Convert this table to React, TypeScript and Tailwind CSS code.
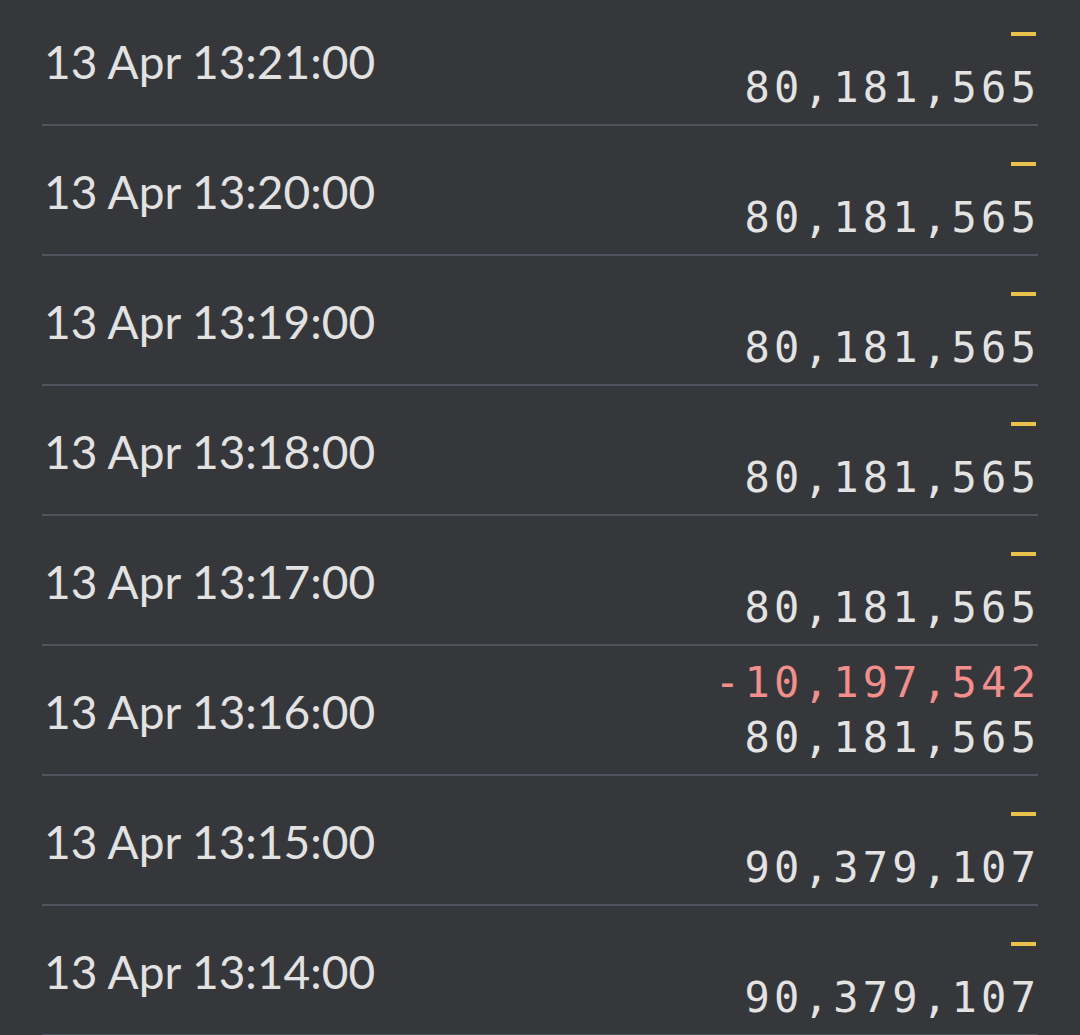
const rows = [
    { time: '13 Apr 13:21:00', change: null, value: '80,181,565' },
    { time: '13 Apr 13:20:00', change: null, value: '80,181,565' },
    { time: '13 Apr 13:19:00', change: null, value: '80,181,565' },
    { time: '13 Apr 13:18:00', change: null, value: '80,181,565' },
    { time: '13 Apr 13:17:00', change: null, value: '80,181,565' },
    { time: '13 Apr 13:16:00', change: '-10,197,542', value: '80,181,565' },
    { time: '13 Apr 13:15:00', change: null, value: '90,379,107' },
    { time: '13 Apr 13:14:00', change: null, value: '90,379,107' },
];

export default function App() {
    return (
        <div className="h-[1035px] w-[1080px] overflow-hidden bg-[#35373b]">
            <div className="-mt-[4px] mx-[42px]">
                {rows.map(row => (
                    <div
                        key={row.time}
                        className="flex h-[130px] items-center justify-between border-b-2 border-[#4f535b]"
                    >
                        <span className="pl-[2px] pt-[2px] text-[46px] text-[#e2e2e2] [font-family:Lato,sans-serif]">
                            {row.time}
                        </span>
                        <div className="flex flex-col items-end pr-[2px] text-[42px] leading-[55px] tracking-[4.3px] [font-family:'DejaVu_Sans_Mono',monospace]">
                            <div className="flex h-[55px] justify-end">
                                {row.change ? (
                                    <span className="mr-[-4.3px] text-[#f28e8c]">{row.change}</span>
                                ) : (
                                    <span className="mt-[27px] block h-[4px] w-[25px] bg-[#e8c24a]" />
                                )}
                            </div>
                            <span className="mr-[-4.3px] text-[#e3e3e3]">{row.value}</span>
                        </div>
                    </div>
                ))}
            </div>
        </div>
    );
}
